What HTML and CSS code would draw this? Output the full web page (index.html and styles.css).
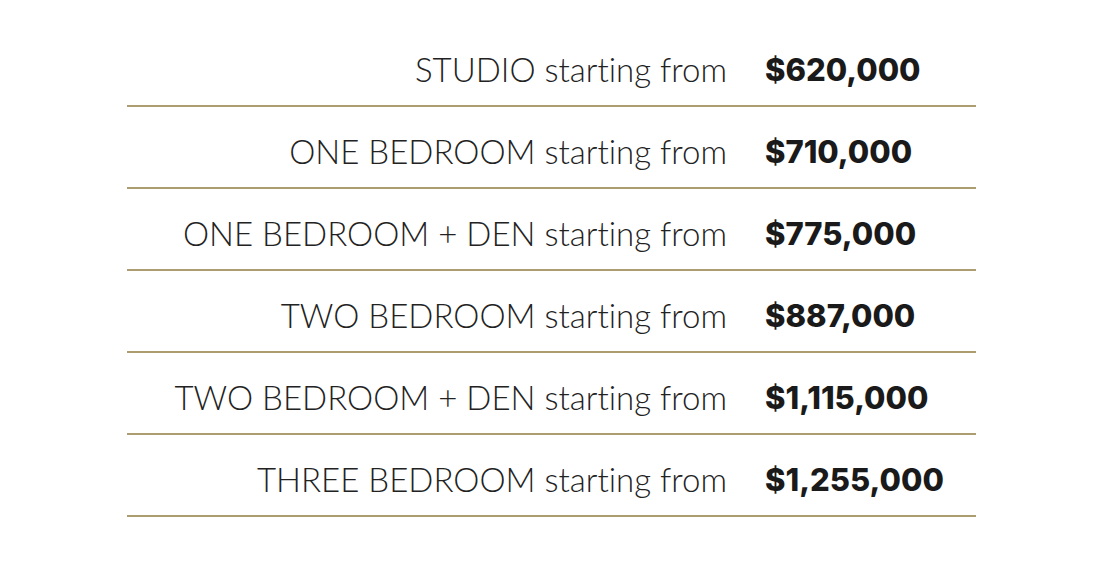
FILE: index.html
```html
<!DOCTYPE html>
<html>
<head>
<meta charset="utf-8">
<link rel="stylesheet" href="styles.css">
</head>
<body>
<div class="table">
  <div class="row"><span class="label">STUDIO starting from</span><span class="price">$620,000</span></div>
  <div class="row"><span class="label">ONE BEDROOM starting from</span><span class="price">$710,000</span></div>
  <div class="row"><span class="label">ONE BEDROOM + DEN starting from</span><span class="price">$775,000</span></div>
  <div class="row"><span class="label">TWO BEDROOM starting from</span><span class="price">$887,000</span></div>
  <div class="row"><span class="label">TWO BEDROOM + DEN starting from</span><span class="price">$1,115,000</span></div>
  <div class="row"><span class="label">THREE BEDROOM starting from</span><span class="price">$1,255,000</span></div>
</div>
</body>
</html>
```
FILE: styles.css
```css
html, body {
  margin: 0;
  padding: 0;
  background: #ffffff;
}
body {
  padding: 25px 0 0 127px;
  font-family: "Lato", "Liberation Sans", sans-serif;
  color: #1a1a1a;
  font-variant-ligatures: none;
}
.table {
  width: 849px;
  display: flex;
  flex-direction: column;
}
.row {
  height: 80px;
  display: flex;
  align-items: center;
  gap: 38px;
  border-bottom: 2px solid #ab9d6f;
  box-sizing: content-box;
}
.label {
  width: 600px;
  text-align: right;
  font-size: 33px;
  font-weight: 300;
  color: #222;
  padding-top: 8px;
}
.price {
  font-family: "Inter", "Lato", sans-serif;
  font-size: 31px;
  font-weight: 800;
  color: #1a1a1a;
  padding-top: 8px;
}
```
